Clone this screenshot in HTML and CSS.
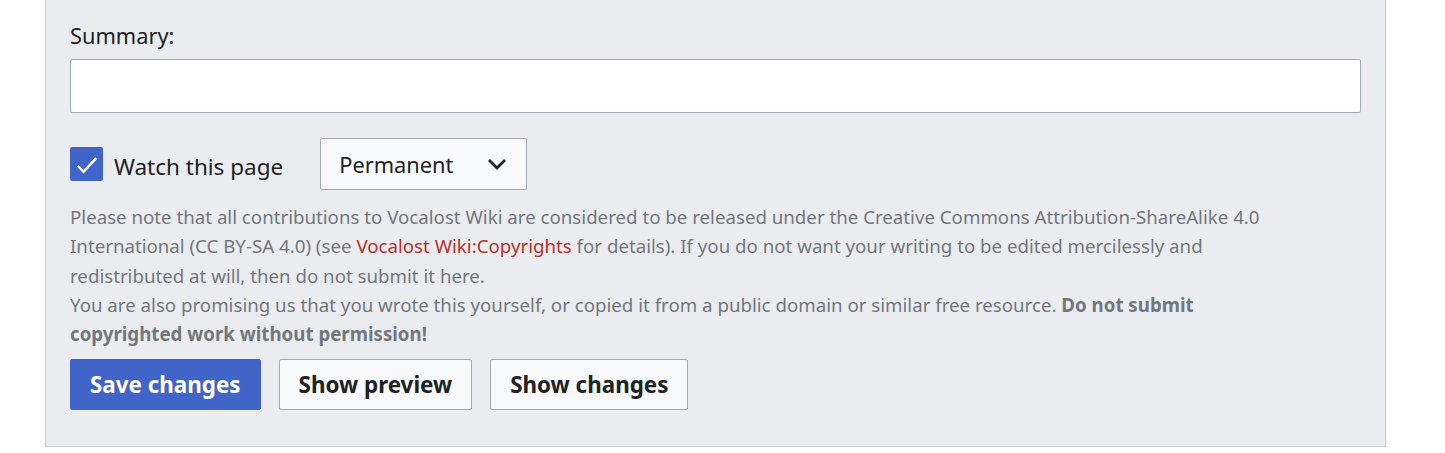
FILE: index.html
```html
<!DOCTYPE html>
<html lang="en">
<head>
    <meta charset="UTF-8">
    <meta name="viewport" content="width=device-width, initial-scale=1.0">
    <title>Editing - Vocalost Wiki</title>
    <link rel="stylesheet" href="styles.css">
</head>
<body>
    <div class="edit-options">
        <label class="summary-label" for="wpSummary">Summary:</label>
        <input type="text" id="wpSummary" class="summary-input">

        <div class="watch-row">
            <label class="checkbox">
                <span class="checkbox-box">
                    <svg viewBox="0 0 34 34" width="34" height="34"><path d="M8 19l6 6 13-14" fill="none" stroke="#fff" stroke-width="2.6"/></svg>
                </span>
                <span class="checkbox-text">Watch this page</span>
            </label>
            <div class="dropdown">
                <span>Permanent</span>
                <svg viewBox="0 0 20 12" width="20" height="12"><path d="M2 2l8 8 8-8" fill="none" stroke="#202122" stroke-width="2.8"/></svg>
            </div>
        </div>

        <div class="copy-notes">
            <p>Please note that all contributions to Vocalost Wiki are considered to be released under the Creative Commons Attribution-ShareAlike 4.0 International (CC BY-SA 4.0) (see <a href="#">Vocalost Wiki:Copyrights</a> for details). If you do not want your writing to be edited mercilessly and<br>redistributed at will, then do not submit it here.<br>
            You are also promising us that you wrote this yourself, or copied it from a public domain or similar free resource. <b>Do not submit<br>copyrighted work without permission!</b></p>
        </div>

        <div class="buttons">
            <button class="btn btn-primary">Save changes</button>
            <button class="btn">Show preview</button>
            <button class="btn">Show changes</button>
        </div>
    </div>
</body>
</html>
```

FILE: styles.css
```css
body {
    margin: 0;
    background: #fff;
    font-family: "Noto Sans", "Open Sans", sans-serif;
    color: #202122;
}

.edit-options {
    margin: 0 59px 6px 45px;
    padding: 20px 24px 36px 24px;
    background: #eaecf0;
    border: 1px solid #c8ccd1;
    border-top: none;
    display: flex;
    flex-direction: column;
}

.summary-label {
    font-size: 21.8px;
    line-height: 32px;
    margin-bottom: 7px;
}

.summary-input {
    box-sizing: border-box;
    height: 54px;
    margin: 0;
    border: 1px solid #a2a9b1;
    border-radius: 2px;
    background: #fff;
}

.watch-row {
    display: flex;
    align-items: center;
    margin-top: 25px;
    gap: 37px;
}

.checkbox {
    display: flex;
    align-items: center;
    gap: 11px;
    font-size: 22.5px;
}

.checkbox-box {
    width: 33px;
    height: 34px;
    margin-bottom: 1px;
    box-sizing: border-box;
    border-radius: 2px;
    background: #4164c8;
    display: flex;
    align-items: center;
    justify-content: center;
}

.checkbox-text {
    padding-top: 4px;
}

.dropdown {
    box-sizing: border-box;
    width: 207px;
    height: 52px;
    padding: 0 19px 0 18px;
    border: 1px solid #a2a9b1;
    border-radius: 2px;
    background: #f8f9fa;
    display: flex;
    align-items: center;
    justify-content: space-between;
    font-size: 21.8px;
}

.copy-notes {
    margin-top: 12px;
    font-size: 18.7px;
    line-height: 29.3px;
    color: #72777d;
}

.copy-notes p {
    margin: 0;
}

.copy-notes a {
    color: #b5312a;
    text-decoration: none;
}

.buttons {
    display: flex;
    gap: 18px;
    margin-top: 11px;
}

.btn {
    box-sizing: border-box;
    height: 51px;
    padding: 0 19px;
    border: 1px solid #a2a9b1;
    border-radius: 2px;
    background: #f8f9fa;
    color: #202122;
    font-family: inherit;
    font-size: 22.4px;
    font-weight: bold;
}

.btn-primary {
    background: #4164c8;
    border-color: #4164c8;
    color: #fff;
}
```
